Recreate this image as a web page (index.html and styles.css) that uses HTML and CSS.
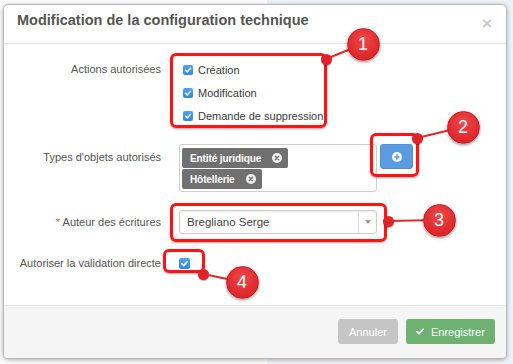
FILE: index.html
```html
<!DOCTYPE html>
<html lang="fr">
<head>
<meta charset="utf-8">
<title>Modification de la configuration technique</title>
<link rel="stylesheet" href="styles.css">
</head>
<body>
<div class="modal">
  <div class="modal-header">
    <h4 class="modal-title">Modification de la configuration technique</h4>
    <span class="close">&times;</span>
  </div>
  <div class="modal-body">
    <div class="form-row row-actions">
      <div class="label">Actions autorisées</div>
      <div class="checks">
        <label class="check"><span class="cb"><svg viewBox="0 0 10 10"><path d="M2.6 5.2 L4.3 6.9 L7.5 3.3" fill="none" stroke="#fff" stroke-width="1.5" stroke-linecap="round" stroke-linejoin="round"/></svg></span>Création</label>
        <label class="check"><span class="cb"><svg viewBox="0 0 10 10"><path d="M2.6 5.2 L4.3 6.9 L7.5 3.3" fill="none" stroke="#fff" stroke-width="1.5" stroke-linecap="round" stroke-linejoin="round"/></svg></span>Modification</label>
        <label class="check"><span class="cb"><svg viewBox="0 0 10 10"><path d="M2.6 5.2 L4.3 6.9 L7.5 3.3" fill="none" stroke="#fff" stroke-width="1.5" stroke-linecap="round" stroke-linejoin="round"/></svg></span>Demande de suppression</label>
      </div>
    </div>
    <div class="form-row row-types">
      <div class="label">Types d'objets autorisés</div>
      <div class="control-group">
        <div class="tagbox">
          <span class="tag">Entité juridique<svg class="tag-x" viewBox="0 0 10 10"><circle cx="5" cy="5" r="5" fill="#f2f2f2"/><path d="M3.3 3.3 L6.7 6.7 M6.7 3.3 L3.3 6.7" stroke="#6f6f6f" stroke-width="1.4" stroke-linecap="round"/></svg></span>
          <span class="tag">Hôtellerie<svg class="tag-x" viewBox="0 0 10 10"><circle cx="5" cy="5" r="5" fill="#f2f2f2"/><path d="M3.3 3.3 L6.7 6.7 M6.7 3.3 L3.3 6.7" stroke="#6f6f6f" stroke-width="1.4" stroke-linecap="round"/></svg></span>
        </div>
        <button class="btn-add" type="button"><svg viewBox="0 0 10 10"><circle cx="5" cy="5" r="5" fill="#fff"/><path d="M5 2.8 V7.2 M2.8 5 H7.2" stroke="#5b9be2" stroke-width="1.5" stroke-linecap="round"/></svg></button>
      </div>
    </div>
    <div class="form-row row-author">
      <div class="label"><span class="req">*</span> Auteur des écritures</div>
      <div class="select">
        <span class="select-text">Bregliano Serge</span>
        <span class="select-arrow"><svg viewBox="0 0 6 4"><path d="M0 0 H6 L3 4 Z" fill="#999"/></svg></span>
      </div>
    </div>
    <div class="form-row row-direct">
      <div class="label">Autoriser la validation directe</div>
      <div class="single-check"><span class="cb cb-lg"><svg viewBox="0 0 10 10"><path d="M2.6 5.2 L4.3 6.9 L7.5 3.3" fill="none" stroke="#fff" stroke-width="1.5" stroke-linecap="round" stroke-linejoin="round"/></svg></span></div>
    </div>
  </div>
  <div class="modal-footer">
    <button class="btn btn-cancel" type="button">Annuler</button>
    <button class="btn btn-save" type="button"><svg class="btn-check" viewBox="0 0 8 7"><path d="M0.9 3.6 L3 5.7 L7.1 1.2" fill="none" stroke="#fff" stroke-width="1.7" stroke-linecap="round" stroke-linejoin="round"/></svg>Enregistrer</button>
  </div>
</div>

<div class="annotations">
  <svg class="connectors" width="513" height="364" viewBox="0 0 513 364">
    <g stroke="#e8262a" stroke-width="2">
      <line x1="326" y1="59" x2="363" y2="44"/>
      <line x1="417" y1="138" x2="463" y2="127"/>
      <line x1="388" y1="221" x2="439" y2="220"/>
      <line x1="203" y1="274" x2="242" y2="282"/>
    </g>
  </svg>
  <div class="hl hl-1"></div>
  <div class="hl hl-2"></div>
  <div class="hl hl-3"></div>
  <div class="hl hl-4"></div>
  <span class="dot dot-1"></span>
  <span class="dot dot-2"></span>
  <span class="dot dot-3"></span>
  <span class="dot dot-4"></span>
  <span class="badge badge-1">1</span>
  <span class="badge badge-2">2</span>
  <span class="badge badge-3">3</span>
  <span class="badge badge-4">4</span>
</div>
</body>
</html>
```

FILE: styles.css
```css
* { box-sizing: border-box; }

html, body {
  margin: 0;
  padding: 0;
}

body {
  width: 513px;
  height: 364px;
  overflow: hidden;
  position: relative;
  background: linear-gradient(to right, #fbfbfb 0, #fbfbfb 52%, #eef2f6 52%, #eef2f6 100%);
  font-family: "Liberation Sans", Arial, sans-serif;
  font-size: 11px;
  color: #333;
}

.modal {
  margin: 4px 0 0 3px;
  width: 504px;
  height: 355px;
  background: #fff;
  border: 1px solid #b9b9b9;
  border-radius: 5px;
  box-shadow: 0 1px 4px rgba(0, 0, 0, 0.3);
  display: flex;
  flex-direction: column;
  overflow: hidden;
}

.modal-header {
  height: 39px;
  padding: 7px 14px 0 13px;
  border-bottom: 1px solid #e6e6e6;
  display: flex;
  align-items: flex-start;
  justify-content: space-between;
}

.modal-title {
  margin: 0;
  font-size: 14.5px;
  line-height: 17px;
  font-weight: bold;
  color: #555;
}

.close {
  font-size: 17px;
  line-height: 20px;
  font-weight: bold;
  color: #c9c9c9;
  margin-top: 2px;
}

.modal-body {
  flex: 1;
  padding-top: 14px;
}

.form-row {
  display: grid;
  grid-template-columns: 157px auto;
  column-gap: 18px;
  align-items: start;
}

.label {
  text-align: right;
  color: #555;
  white-space: nowrap;
}

.req { color: #d9534f; }

/* Row 1 */
.row-actions .label { line-height: 23px; }

.checks {
  padding-left: 4px;
  display: flex;
  flex-direction: column;
}

.check {
  display: flex;
  align-items: center;
  height: 23px;
  color: #3a3a3a;
}

.cb {
  width: 10px;
  height: 10px;
  border-radius: 2px;
  background: linear-gradient(#4fa3f7, #2f86ea);
  display: inline-flex;
  margin-right: 5px;
  flex: none;
}

.cb svg { width: 100%; height: 100%; display: block; }

.cb-lg {
  width: 11px;
  height: 11px;
  margin-right: 0;
}

/* Row 2 */
.row-types { margin-top: 17px; }
.row-types .label { line-height: 26px; }

.control-group {
  display: flex;
  align-items: flex-start;
  gap: 3px;
}

.tagbox {
  width: 198px;
  height: 48px;
  border: 1px solid #cfcfcf;
  border-radius: 3px;
  padding: 3px 2px 2px;
  display: flex;
  flex-direction: column;
  align-items: flex-start;
  gap: 1px;
}

.tag {
  height: 20px;
  display: inline-flex;
  align-items: center;
  padding: 0 6px 0 8px;
  background: #707070;
  border-radius: 2px;
  color: #fff;
  font-weight: bold;
  font-size: 10px;
  letter-spacing: -0.1px;
}

.tag-x {
  width: 10px;
  height: 10px;
  margin-left: 11px;
}

.btn-add {
  width: 33px;
  height: 25px;
  padding: 0;
  margin: 0;
  border: 1px solid #4f8fd6;
  border-radius: 3px;
  background: #5b9be2;
  display: flex;
  align-items: center;
  justify-content: center;
}

.btn-add svg { width: 10px; height: 10px; display: block; }

/* Row 3 */
.row-author { margin-top: 18px; }
.row-author .label { line-height: 24px; }

.select {
  width: 198px;
  height: 24px;
  border: 1px solid #cdcdcd;
  border-radius: 3px;
  background: #fff;
  box-shadow: inset 0 1px 2px rgba(0, 0, 0, 0.08);
  display: flex;
  align-items: stretch;
}

.select-text {
  flex: 1;
  padding-left: 7px;
  line-height: 22px;
  font-size: 11.5px;
  color: #444;
}

.select-arrow {
  width: 18px;
  border-left: 1px solid #dcdcdc;
  display: flex;
  align-items: center;
  justify-content: center;
}

.select-arrow svg { width: 6px; height: 4px; display: block; }

/* Row 4 */
.row-direct { margin-top: 18px; }
.row-direct .label { line-height: 22px; }

.single-check {
  height: 22px;
  display: flex;
  align-items: center;
}

/* Footer */
.modal-footer {
  height: 53px;
  background: #f5f5f5;
  border-top: 1px solid #e6e6e6;
  display: flex;
  justify-content: flex-end;
  align-items: flex-start;
  gap: 8px;
  padding: 13px 11px 0 0;
}

.btn {
  height: 25px;
  border: none;
  border-radius: 3px;
  color: #fff;
  font-family: "Liberation Sans", Arial, sans-serif;
  font-size: 11px;
  display: flex;
  align-items: center;
  margin: 0;
}

.btn-cancel {
  width: 60px;
  justify-content: center;
  padding: 0;
  background: #c5c5c5;
}

.btn-save {
  width: 89px;
  padding: 0 0 0 10px;
  background: #6db271;
}

.btn-check {
  width: 8px;
  height: 7px;
  margin-right: 7px;
}

/* Annotation overlays */
.annotations {
  position: absolute;
  left: 0;
  top: 0;
  width: 513px;
  height: 364px;
  pointer-events: none;
}

.connectors {
  position: absolute;
  left: 0;
  top: 0;
}

.hl {
  position: absolute;
  border: 3px solid #ff1414;
  border-radius: 6px;
  box-shadow: 0 1px 2px rgba(0, 0, 0, 0.35), inset 0 0 1px rgba(0, 0, 0, 0.2);
}

.hl-1 { left: 170px; top: 53px; width: 157px; height: 75px; }
.hl-2 { left: 370px; top: 133px; width: 49px; height: 44px; }
.hl-3 { left: 170px; top: 203px; width: 217px; height: 39px; }
.hl-4 { left: 163px; top: 249px; width: 42px; height: 24px; }

.dot {
  position: absolute;
  width: 11px;
  height: 11px;
  margin: -5.5px 0 0 -5.5px;
  border-radius: 50%;
  background: #e0222a;
  box-shadow: 0 1px 1px rgba(0, 0, 0, 0.3);
}

.dot-1 { left: 326px; top: 59px; }
.dot-2 { left: 417px; top: 138px; }
.dot-3 { left: 388px; top: 221px; }
.dot-4 { left: 203px; top: 274px; }

.badge {
  position: absolute;
  width: 33px;
  height: 33px;
  margin: -16.5px 0 0 -16.5px;
  border-radius: 50%;
  background: radial-gradient(circle at 50% 35%, #ee4a4a 0, #e02b2f 60%, #cc2024 100%);
  border: 1px solid #c21c20;
  box-shadow: 0 1px 3px rgba(0, 0, 0, 0.45);
  color: #fff;
  font-family: "Liberation Sans", Arial, sans-serif;
  font-size: 18px;
  line-height: 31px;
  text-align: center;
}

.badge-1 { left: 363px; top: 44px; }
.badge-2 { left: 463px; top: 127px; }
.badge-3 { left: 439px; top: 220px; }
.badge-4 { left: 242px; top: 282px; }
```
